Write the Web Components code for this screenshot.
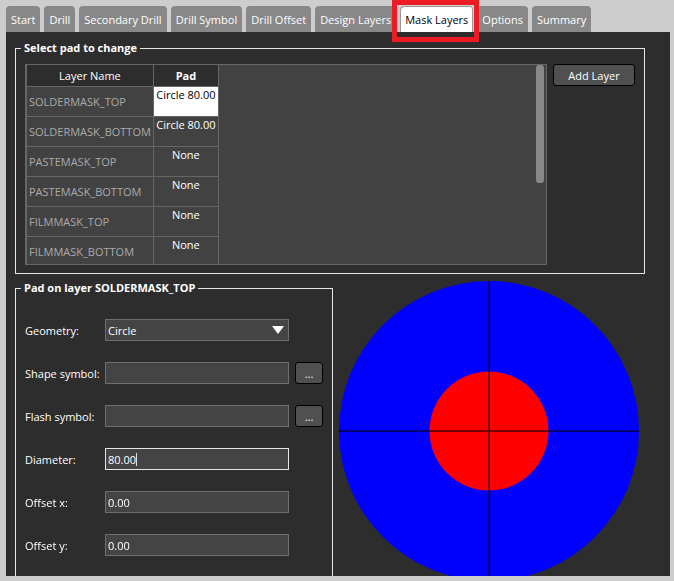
<!DOCTYPE html>
<html lang="en">
<head>
<meta charset="utf-8">
<title>Padstack editor</title>
<style>
  html { height: 100%; }
  body {
    margin: 0;
    height: 100%;
    background: #cdcdcd;
    color: #fff;
    font: 11px/16px "Open Sans", "Noto Sans", sans-serif;
    overflow: hidden;
  }
</style>
</head>
<body>
<padstack-editor></padstack-editor>
<script>
  const define = (name, markup, setup) => {
    const template = document.createElement('template');
    template.innerHTML = markup;
    customElements.define(name, class extends HTMLElement {
      connectedCallback() {
        if (this.shadowRoot) return;
        this.attachShadow({ mode: 'open' }).append(template.content.cloneNode(true));
        if (setup) setup(this, this.shadowRoot);
      }
    });
  };

  define('editor-tab', `
    <style>
      :host { display: block; position: relative; }
      button {
        display: block; height: 26px; padding: 2px 5px 0; border: 0;
        border-radius: 4px 4px 0 0; background: #888; color: #fff;
        font: inherit; white-space: nowrap;
      }
      :host([active]) { z-index: 1; }
      :host([active]) button { background: #fff; color: #000; box-shadow: inset 1px 1px #999, inset -1px 0 #999; }
      :host([active])::after {
        content: ""; position: absolute; inset: -6px -6px -10px -8px;
        border: 5px solid #ed1c24; pointer-events: none;
      }
    </style>
    <button type="button" role="tab"><slot></slot></button>`,
    (host, root) => root.querySelector('button').setAttribute('aria-selected', host.hasAttribute('active')));

  define('group-box', `
    <style>
      :host { display: block; }
      fieldset { margin: 0; padding: 8px 9px; border: 1px solid #e6e6e6; min-width: 0; }
      legend { padding: 0 3px; margin-left: -4px; font-weight: 700; }
    </style>
    <fieldset><legend></legend><slot></slot></fieldset>`,
    (host, root) => { root.querySelector('legend').textContent = host.getAttribute('label'); });

  define('tool-button', `
    <style>
      :host { display: block; }
      button {
        display: block; width: 100%; height: 22px; padding: 2px 0 0; border: 1px solid #000;
        border-radius: 3px; background: #505050; color: #fff; font: inherit;
      }
    </style>
    <button type="button"><slot></slot></button>`,
    (host, root) => {
      if (host.title) root.querySelector('button').setAttribute('aria-label', host.title);
    });

  define('layer-table', `
    <style>
      :host {
        display: block; position: relative; height: 199px; overflow: hidden;
        border: 1px solid #666; background: #424242;
      }
      table { border-collapse: collapse; margin: -1px 0 0 -1px; border-left: 2px solid #666; }
      th, td { border: 1px solid #666; padding: 0 2px; height: 29px; box-sizing: border-box; white-space: nowrap; }
      thead th { height: 22px; background: #2d2d2d; font-weight: 400; }
      thead th + th { font-weight: 700; }
      tbody tr { height: 30px; }
      tbody th { width: 126px; color: #aaa; font-weight: 400; text-align: left; }
      td { width: 65px; text-align: center; vertical-align: top; }
      td.selected { background: #fff; color: #000; }
      .thumb { position: absolute; top: 0; right: 2px; width: 8px; height: 118px; border-radius: 3px; background: #888; }
    </style>
    <table>
      <thead><tr><th scope="col">Layer Name</th><th scope="col">Pad</th></tr></thead>
      <tbody></tbody>
    </table>
    <div class="thumb"></div>`,
    (host, root) => {
      const rows = [
        ['SOLDERMASK_TOP', 'Circle 80.00'], ['SOLDERMASK_BOTTOM', 'Circle 80.00'],
        ['PASTEMASK_TOP', 'None'], ['PASTEMASK_BOTTOM', 'None'],
        ['FILMMASK_TOP', 'None'], ['FILMMASK_BOTTOM', 'None']
      ];
      root.querySelector('tbody').innerHTML = rows.map(([name, pad], i) =>
        `<tr><th scope="row">${name}</th><td${i ? '' : ' class="selected"'}>${pad}</td></tr>`).join('');
    });

  define('pad-field', `
    <style>
      :host {
        display: grid; grid-template-columns: 74px minmax(0, 1fr) 28px;
        column-gap: 6px; align-items: center;
      }
      label { white-space: nowrap; padding-top: 2px; }
      .box { display: grid; align-items: center; }
      input, select, svg, .caret { grid-area: 1 / 1; }
      input, select {
        appearance: none; box-sizing: border-box; width: 100%; height: 22px; margin: 0;
        padding: 1px 2px 0; border: 1px solid #6f6f6f; border-radius: 0; outline: 0;
        background: #444; color: #fff; font: inherit; caret-color: transparent;
      }
      input:focus { border-color: #e6e6e6; }
      svg { justify-self: end; margin-right: 5px; pointer-events: none; }
      .caret { width: 1px; height: 13px; margin-left: 31px; background: #ddd; pointer-events: none; }
    </style>
    <label for="control"></label><div class="box"></div><slot></slot>`,
    (host, root) => {
      root.querySelector('label').textContent = host.getAttribute('label');
      const value = host.getAttribute('value') || '';
      const box = root.querySelector('.box');
      if (host.hasAttribute('choice')) {
        box.innerHTML = `<select id="control"><option>${value}</option></select>
          <svg width="12" height="8" viewBox="0 0 12 8"><path d="M0 0h12L6 8z" fill="#fff"/></svg>`;
      } else {
        box.innerHTML = `<input id="control" type="text" value="${value}">`;
        if (host.hasAttribute('current')) {
          const input = box.firstChild;
          input.focus();
          input.setSelectionRange(value.length, value.length);
          const caret = document.createElement('span');
          caret.className = 'caret';
          box.append(caret);
        }
      }
    });

  define('pad-preview', `
    <style>
      :host { display: block; }
      svg { display: block; }
    </style>
    <svg width="301" height="301" viewBox="0 0 301 301" role="img" aria-label="Pad preview">
      <circle cx="150" cy="150" r="150" fill="#00f"/>
      <circle cx="150" cy="150" r="59.5" fill="#f00"/>
      <path d="M0 150h300M150 0v300" stroke="#000" stroke-opacity=".55" stroke-width="2"/>
    </svg>`);

  define('padstack-editor', `
    <style>
      :host {
        display: flex; flex-direction: column; box-sizing: border-box; height: 100%;
        padding: 6px 4px 5px 6px;
      }
      nav { display: flex; gap: 4px; }
      main { flex: 1; min-height: 0; overflow: hidden; padding: 8px 25px 0 9px; background: #2d2d2d; }
      .layers { display: grid; grid-template-columns: minmax(0, 1fr) 82px; gap: 6px; align-items: start; }
      .lower { display: grid; grid-template-columns: minmax(0, 318px) auto; justify-content: start; align-items: start; gap: 6px; padding-top: 6px; }
      .fields { display: grid; gap: 21px; padding: 15px 0 40px; }
      pad-preview { padding-top: 1px; }
    </style>
    <nav role="tablist">
      <editor-tab>Start</editor-tab>
      <editor-tab>Drill</editor-tab>
      <editor-tab>Secondary Drill</editor-tab>
      <editor-tab>Drill Symbol</editor-tab>
      <editor-tab>Drill Offset</editor-tab>
      <editor-tab>Design Layers</editor-tab>
      <editor-tab active>Mask Layers</editor-tab>
      <editor-tab>Options</editor-tab>
      <editor-tab>Summary</editor-tab>
    </nav>
    <main>
      <group-box label="Select pad to change">
        <div class="layers">
          <layer-table></layer-table>
          <tool-button>Add Layer</tool-button>
        </div>
      </group-box>
      <div class="lower">
        <group-box label="Pad on layer SOLDERMASK_TOP">
          <div class="fields">
            <pad-field label="Geometry:" value="Circle" choice></pad-field>
            <pad-field label="Shape symbol:"><tool-button title="Browse shape symbols">...</tool-button></pad-field>
            <pad-field label="Flash symbol:"><tool-button title="Browse flash symbols">...</tool-button></pad-field>
            <pad-field label="Diameter:" value="80.00" current></pad-field>
            <pad-field label="Offset x:" value="0.00"></pad-field>
            <pad-field label="Offset y:" value="0.00"></pad-field>
          </div>
        </group-box>
        <pad-preview></pad-preview>
      </div>
    </main>`);
</script>
</body>
</html>
